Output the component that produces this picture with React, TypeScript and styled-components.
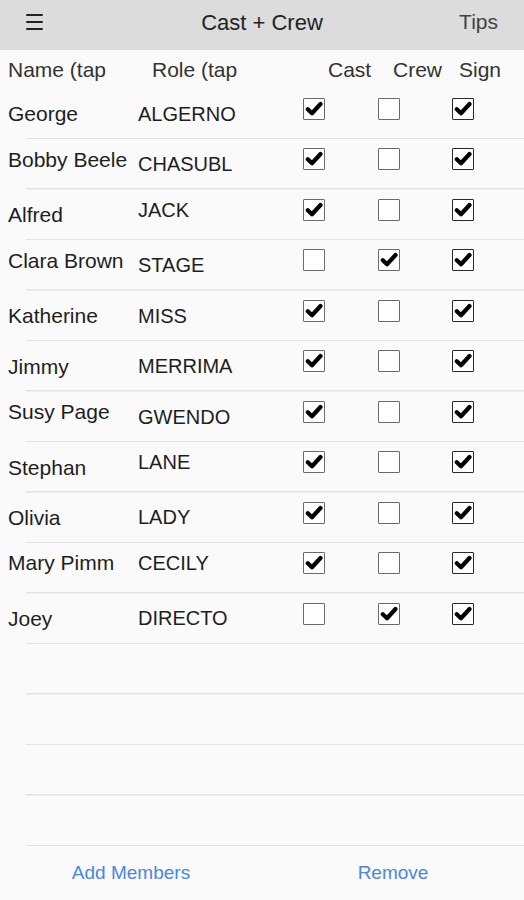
import React from "react";
import styled, { createGlobalStyle } from "styled-components";

const GlobalStyle = createGlobalStyle`
  body {
    margin: 0;
    background: #fafafa;
    font-family: "Liberation Sans", Arial, sans-serif;
  }
`;

const Screen = styled.div`
  width: 524px;
  height: 900px;
  display: flex;
  flex-direction: column;
  background: #fafafa;
  overflow: hidden;
`;

const TopBar = styled.header`
  height: 50px;
  flex: none;
  background: #dcdcdc;
  display: grid;
  grid-template-columns: 1fr auto 1fr;
  align-items: center;
  padding: 0 26px;
`;

const MenuButton = styled.div`
  width: 17px;
  display: flex;
  flex-direction: column;
  gap: 4.5px;
  margin-top: -6px;
  span {
    display: block;
    height: 2.5px;
    background: #222;
    border-radius: 1px;
  }
`;

const Title = styled.h1`
  margin: 0 0 4px;
  font-size: 22px;
  font-weight: 500;
  color: #222;
  font-family: "Liberation Sans", Arial, sans-serif;
`;

const Tips = styled.div`
  justify-self: end;
  font-size: 21px;
  color: #444;
  margin-bottom: 6px;
`;

const HeaderRow = styled.div`
  height: 39px;
  flex: none;
  display: grid;
  grid-template-columns: 144px 176px 65px 66px auto;
  align-items: center;
  padding-left: 8px;
  font-size: 21px;
  color: #333;
`;

const Rows = styled.div`
  display: flex;
  flex-direction: column;
`;

const Row = styled.div`
  height: 50.47px;
  box-sizing: border-box;
  display: grid;
  grid-template-columns: 130px 165px 75px 74px auto;
  align-items: center;
  padding-left: 8px;
  background: linear-gradient(#e2e2e2, #e2e2e2) no-repeat 26px 100% /
    calc(100% - 26px) 1.5px;
`;

const Cell = styled.div<{ $up?: boolean; $size: number }>`
  font-size: ${(p) => p.$size}px;
  color: #1e1e1e;
  white-space: nowrap;
  overflow: hidden;
  transform: translateY(${(p) => (p.$up ? "-5px" : "0")});
`;

const Box = styled.div<{ $dark?: boolean }>`
  align-self: start;
  margin-top: 9px;
  width: 22px;
  height: 22px;
  box-sizing: border-box;
  border: 1.5px solid ${(p) => (p.$dark ? "#2a2a2a" : "#6a6a6a")};
  border-radius: 1px;
  background: #fff;
  display: flex;
  align-items: center;
  justify-content: center;
`;

const Spacer = styled.div`
  flex: 1;
`;

const Footer = styled.footer`
  height: 54px;
  flex: none;
  display: grid;
  grid-template-columns: 1fr 1fr;
  align-items: center;
  text-align: center;
  font-size: 19px;
  color: #4a86e0;
`;

const Check = ({ on, dark }: { on: boolean; dark?: boolean }) => (
  <Box $dark={dark}>
    {on && (
      <svg width="18" height="18" viewBox="0 0 18 18">
        <polyline
          points="2.8,9.2 7,13.2 15.5,4"
          fill="none"
          stroke="#000"
          strokeWidth="4.2"
          strokeLinecap="round"
          strokeLinejoin="round"
        />
      </svg>
    )}
  </Box>
);

type Member = {
  name: string;
  role: string;
  cast: boolean;
  crew: boolean;
  sign: boolean;
  nameUp?: boolean;
  roleUp?: boolean;
};

const members: Member[] = [
  { name: "George", role: "ALGERNO", cast: true, crew: false, sign: true },
  { name: "Bobby Beele", role: "CHASUBL", cast: true, crew: false, sign: true, nameUp: true },
  { name: "Alfred", role: "JACK", cast: true, crew: false, sign: true, roleUp: true },
  { name: "Clara Brown", role: "STAGE", cast: false, crew: true, sign: true, nameUp: true },
  { name: "Katherine", role: "MISS", cast: true, crew: false, sign: true },
  { name: "Jimmy", role: "MERRIMA", cast: true, crew: false, sign: true },
  { name: "Susy Page", role: "GWENDO", cast: true, crew: false, sign: true, nameUp: true },
  { name: "Stephan", role: "LANE", cast: true, crew: false, sign: true, roleUp: true },
  { name: "Olivia", role: "LADY", cast: true, crew: false, sign: true },
  { name: "Mary Pimm", role: "CECILY", cast: true, crew: false, sign: true, nameUp: true, roleUp: true },
  { name: "Joey", role: "DIRECTO", cast: false, crew: true, sign: true },
];

export default function App() {
  return (
    <>
      <GlobalStyle />
      <Screen>
        <TopBar>
          <MenuButton>
            <span />
            <span />
            <span />
          </MenuButton>
          <Title>Cast + Crew</Title>
          <Tips>Tips</Tips>
        </TopBar>
        <HeaderRow>
          <div>Name (tap</div>
          <div>Role (tap</div>
          <div>Cast</div>
          <div>Crew</div>
          <div>Sign</div>
        </HeaderRow>
        <Rows>
          {members.map((m) => (
            <Row key={m.name}>
              <Cell $size={21} $up={m.nameUp}>{m.name}</Cell>
              <Cell $size={20} $up={m.roleUp}>{m.role}</Cell>
              <Check on={m.cast} />
              <Check on={m.crew} />
              <Check on={m.sign} dark />
            </Row>
          ))}
          {[0, 1, 2, 3].map((i) => (
            <Row key={"empty" + i} />
          ))}
        </Rows>
        <Spacer />
        <Footer>
          <div>Add Members</div>
          <div>Remove</div>
        </Footer>
      </Screen>
    </>
  );
}
